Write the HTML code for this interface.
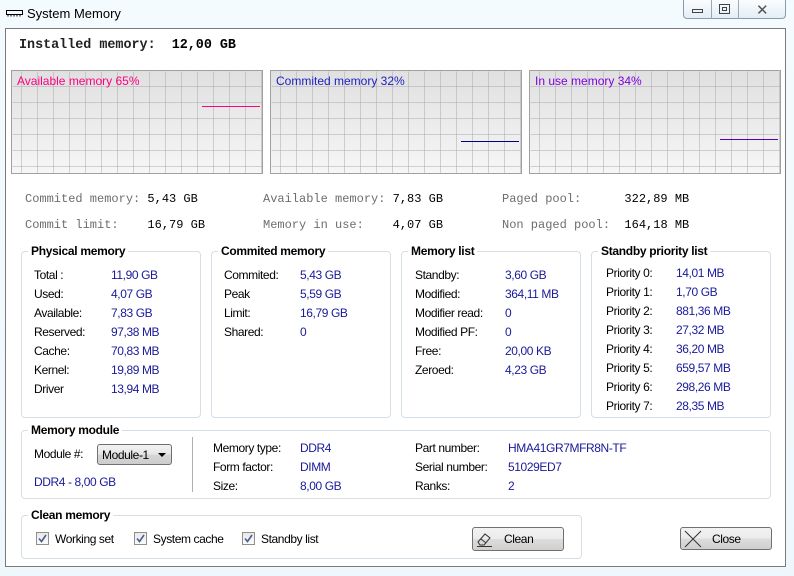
<!DOCTYPE html>
<html><head><meta charset="utf-8"><style>
*{margin:0;padding:0;box-sizing:border-box}
body{width:794px;height:576px;overflow:hidden;background:linear-gradient(180deg,#f4fbfe 0%,#eef7fc 100%);font-family:"Liberation Sans",sans-serif;font-size:12px;position:relative;color:#000}
.a{position:absolute;white-space:nowrap}
.win{position:absolute;left:5px;top:28px;width:781px;height:539px;background:#fff;border:1px solid #7a7a7a}
.m{font-family:"Liberation Mono",monospace;font-size:12px;white-space:pre}
.g{color:#6d6d6d}
.v{color:#1a1a9a}
.grp{position:absolute;border:1px solid #d5dfe5;border-radius:4px}
.gt{position:absolute;top:-8px;left:6px;background:#fff;padding:0 3px;font-weight:bold;font-size:12px;letter-spacing:-0.3px}
.cb{position:absolute;width:13px;height:13px;border:1px solid #8f8f8f;background:linear-gradient(#e8e8e8,#fafafa)}
.btn{position:absolute;border:1px solid #707070;border-radius:3px;background:linear-gradient(#f2f2f2 0%,#ebebeb 50%,#dddddd 51%,#cfcfcf 100%)}
.sp{letter-spacing:-0.4px}
</style></head><body>
<svg class="a" style="left:6px;top:9px" width="18" height="8"><rect x="0.5" y="1.5" width="16" height="4" fill="none" stroke="#000"/><path d="M2 5.5v2M5 5.5v2M8 5.5v2M11 5.5v2M14 5.5v2" stroke="#000"/></svg>
<div class="a" style="left:27px;top:6px;font-size:13px;color:#000">System Memory</div>
<div class="a" style="left:683px;top:0;width:103px;height:19px;border:1px solid #8a9aa8;border-top:none;border-radius:0 0 4px 4px;background:linear-gradient(#fafdff,#e4eef6)"></div>
<div class="a" style="left:711px;top:0;width:1px;height:19px;background:#9aa8b4"></div>
<div class="a" style="left:738px;top:0;width:1px;height:19px;background:#9aa8b4"></div>
<div class="a" style="left:692px;top:9px;width:11px;height:4px;border:1px solid #444"></div>
<div class="a" style="left:719px;top:4px;width:11px;height:10px;border:1px solid #444"><div style="margin:2px;width:5px;height:4px;border:1px solid #444"></div></div>
<div class="a" style="left:756px;top:1px;font-size:15px;color:#555">✕</div>

<div class="win"></div>
<div class="a m" style="left:19px;top:38px;font-size:13.4px;font-weight:bold;color:#222">Installed memory:  <span style="color:#000">12,00 GB</span></div>

<svg class="a" style="left:11px;top:70px" width="252" height="104">
<defs><linearGradient id="bg" x1="0" y1="0" x2="0" y2="1"><stop offset="0" stop-color="#e0e0e0"/><stop offset="1" stop-color="#f6f6f6"/></linearGradient>
<pattern id="gr" x="10" y="16" width="16" height="16" patternUnits="userSpaceOnUse"><path d="M0 0V16M0 0H16" stroke="#a9a9a9" stroke-width="1" fill="none"/></pattern></defs>
<rect x="0.5" y="0.5" width="251" height="103" fill="url(#bg)" stroke="#a0a0a0"/>
<rect x="1" y="1" width="250" height="102" fill="url(#gr)" transform="translate(0.5 0.5)"/>
<line x1="191" y1="36.5" x2="249" y2="36.5" stroke="#ff0080"/>
<text x="6" y="15" font-family="Liberation Sans" font-size="12" fill="#ff0080">Available memory 65%</text></svg>
<svg class="a" style="left:270px;top:70px" width="252" height="104">
<rect x="0.5" y="0.5" width="251" height="103" fill="url(#bg)" stroke="#a0a0a0"/>
<rect x="1" y="1" width="250" height="102" fill="url(#gr)" transform="translate(0.5 0.5)"/>
<line x1="191" y1="71.5" x2="249" y2="71.5" stroke="#000080"/>
<text x="6" y="15" font-family="Liberation Sans" font-size="12" fill="#2020c0">Commited memory 32%</text></svg>
<svg class="a" style="left:529px;top:70px" width="252" height="104">
<rect x="0.5" y="0.5" width="251" height="103" fill="url(#bg)" stroke="#a0a0a0"/>
<rect x="1" y="1" width="250" height="102" fill="url(#gr)" transform="translate(0.5 0.5)"/>
<line x1="191" y1="69.5" x2="249" y2="69.5" stroke="#5a00a8"/>
<text x="6" y="15" font-family="Liberation Sans" font-size="12" fill="#8000e0">In use memory 34%</text></svg>

<div class="a m" style="left:25px;top:192px"><span class="g">Commited memory:</span> 5,43 GB</div>
<div class="a m" style="left:25px;top:218px"><span class="g">Commit limit:</span>    16,79 GB</div>
<div class="a m" style="left:263px;top:192px"><span class="g">Available memory:</span> 7,83 GB</div>
<div class="a m" style="left:263px;top:218px"><span class="g">Memory in use:</span>    4,07 GB</div>
<div class="a m" style="left:502px;top:192px"><span class="g">Paged pool:</span>      322,89 MB</div>
<div class="a m" style="left:502px;top:218px"><span class="g">Non paged pool:</span>  164,18 MB</div>

<div class="grp" style="left:21px;top:251px;width:180px;height:167px"><div class="gt">Physical memory</div></div>
<div class="grp" style="left:211px;top:251px;width:180px;height:167px"><div class="gt">Commited memory</div></div>
<div class="grp" style="left:401px;top:251px;width:180px;height:167px"><div class="gt">Memory list</div></div>
<div class="grp" style="left:591px;top:251px;width:180px;height:167px"><div class="gt">Standby priority list</div></div>

<div class="sp">
<div class="a" style="left:34px;top:268px">Total :</div><div class="a v" style="left:111px;top:268px">11,90 GB</div>
<div class="a" style="left:34px;top:287px">Used:</div><div class="a v" style="left:111px;top:287px">4,07 GB</div>
<div class="a" style="left:34px;top:306px">Available:</div><div class="a v" style="left:111px;top:306px">7,83 GB</div>
<div class="a" style="left:34px;top:325px">Reserved:</div><div class="a v" style="left:111px;top:325px">97,38 MB</div>
<div class="a" style="left:34px;top:344px">Cache:</div><div class="a v" style="left:111px;top:344px">70,83 MB</div>
<div class="a" style="left:34px;top:363px">Kernel:</div><div class="a v" style="left:111px;top:363px">19,89 MB</div>
<div class="a" style="left:34px;top:382px">Driver</div><div class="a v" style="left:111px;top:382px">13,94 MB</div>

<div class="a" style="left:224px;top:268px">Commited:</div><div class="a v" style="left:300px;top:268px">5,43 GB</div>
<div class="a" style="left:224px;top:287px">Peak</div><div class="a v" style="left:300px;top:287px">5,59 GB</div>
<div class="a" style="left:224px;top:306px">Limit:</div><div class="a v" style="left:300px;top:306px">16,79 GB</div>
<div class="a" style="left:224px;top:325px">Shared:</div><div class="a v" style="left:300px;top:325px">0</div>

<div class="a" style="left:415px;top:268px">Standby:</div><div class="a v" style="left:505px;top:268px">3,60 GB</div>
<div class="a" style="left:415px;top:287px">Modified:</div><div class="a v" style="left:505px;top:287px">364,11 MB</div>
<div class="a" style="left:415px;top:306px">Modifier read:</div><div class="a v" style="left:505px;top:306px">0</div>
<div class="a" style="left:415px;top:325px">Modified PF:</div><div class="a v" style="left:505px;top:325px">0</div>
<div class="a" style="left:415px;top:344px">Free:</div><div class="a v" style="left:505px;top:344px">20,00 KB</div>
<div class="a" style="left:415px;top:363px">Zeroed:</div><div class="a v" style="left:505px;top:363px">4,23 GB</div>

<div class="a" style="left:606px;top:266px">Priority 0:</div><div class="a v" style="left:676px;top:266px">14,01 MB</div>
<div class="a" style="left:606px;top:285px">Priority 1:</div><div class="a v" style="left:676px;top:285px">1,70 GB</div>
<div class="a" style="left:606px;top:304px">Priority 2:</div><div class="a v" style="left:676px;top:304px">881,36 MB</div>
<div class="a" style="left:606px;top:323px">Priority 3:</div><div class="a v" style="left:676px;top:323px">27,32 MB</div>
<div class="a" style="left:606px;top:342px">Priority 4:</div><div class="a v" style="left:676px;top:342px">36,20 MB</div>
<div class="a" style="left:606px;top:361px">Priority 5:</div><div class="a v" style="left:676px;top:361px">659,57 MB</div>
<div class="a" style="left:606px;top:380px">Priority 6:</div><div class="a v" style="left:676px;top:380px">298,26 MB</div>
<div class="a" style="left:606px;top:399px">Priority 7:</div><div class="a v" style="left:676px;top:399px">28,35 MB</div>
</div>

<div class="grp" style="left:21px;top:430px;width:750px;height:69px"><div class="gt">Memory module</div></div>
<div class="sp">
<div class="a" style="left:34px;top:447px">Module #:</div>
<div class="a" style="left:97px;top:444px;width:75px;height:21px;border:1px solid #707070;border-radius:3px;background:linear-gradient(#f2f2f2,#e6e6e6 50%,#d6d6d6 51%,#cdcdcd)"><span style="position:absolute;left:4px;top:3px">Module-1</span><span style="position:absolute;left:60px;top:8px;border:4px solid transparent;border-top:4px solid #000;border-bottom:none"></span></div>
<div class="a v" style="left:34px;top:475px">DDR4 - 8,00 GB</div>
<div class="a" style="left:192px;top:437px;width:1px;height:55px;background:#b0b0b0"></div>
<div class="a" style="left:213px;top:441px">Memory type:</div><div class="a v" style="left:300px;top:441px">DDR4</div>
<div class="a" style="left:213px;top:460px">Form factor:</div><div class="a v" style="left:300px;top:460px">DIMM</div>
<div class="a" style="left:213px;top:479px">Size:</div><div class="a v" style="left:300px;top:479px">8,00 GB</div>
<div class="a" style="left:415px;top:441px">Part number:</div><div class="a v" style="left:508px;top:441px">HMA41GR7MFR8N-TF</div>
<div class="a" style="left:415px;top:460px">Serial number:</div><div class="a v" style="left:508px;top:460px">51029ED7</div>
<div class="a" style="left:415px;top:479px">Ranks:</div><div class="a v" style="left:508px;top:479px">2</div>
</div>

<div class="grp" style="left:21px;top:515px;width:561px;height:44px"><div class="gt">Clean memory</div></div>
<div class="cb" style="left:36px;top:532px"><svg width="11" height="11" style="position:absolute;left:0;top:0"><path d="M2 5.5l2.5 3L9 2" stroke="#4a5e8c" stroke-width="1.6" fill="none"/></svg></div>
<div class="a sp" style="left:55px;top:532px">Working set</div>
<div class="cb" style="left:134px;top:532px"><svg width="11" height="11" style="position:absolute;left:0;top:0"><path d="M2 5.5l2.5 3L9 2" stroke="#4a5e8c" stroke-width="1.6" fill="none"/></svg></div>
<div class="a sp" style="left:153px;top:532px">System cache</div>
<div class="cb" style="left:242px;top:532px"><svg width="11" height="11" style="position:absolute;left:0;top:0"><path d="M2 5.5l2.5 3L9 2" stroke="#4a5e8c" stroke-width="1.6" fill="none"/></svg></div>
<div class="a sp" style="left:261px;top:532px">Standby list</div>

<div class="btn" style="left:472px;top:527px;width:92px;height:24px">
<svg style="position:absolute;left:3px;top:3px" width="18" height="17"><path d="M2 11l7-8 5 4-6 7H4z M5 8l5 4" stroke="#333" fill="none"/><path d="M1 15.5h15" stroke="#333"/></svg>
<span style="position:absolute;left:31px;top:4px" class="sp">Clean</span></div>
<div class="btn" style="left:680px;top:527px;width:92px;height:23px">
<svg style="position:absolute;left:3px;top:2px" width="18" height="18"><path d="M1 1l16 16M17 1L1 17" stroke="#333"/></svg>
<span style="position:absolute;left:31px;top:4px" class="sp">Close</span></div>
</body></html>
